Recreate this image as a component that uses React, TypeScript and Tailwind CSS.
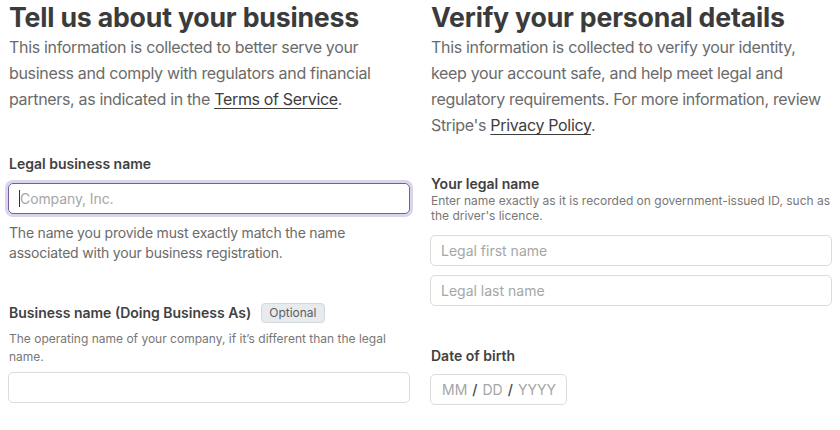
import React from "react";

const font = { fontFamily: "Inter, 'Liberation Sans', sans-serif" };

export default function App() {
  return (
    <div className="w-[840px] h-[430px] bg-white overflow-hidden px-2" style={font}>
      <div className="grid grid-cols-2 gap-5">
        {/* Left column */}
        <div className="flex flex-col">
          <h1 className="text-[26.7px] leading-[34px] font-bold text-[#3b3b3b] tracking-[-0.2px] pl-px">
            Tell us about your business
          </h1>
          <p className="text-[16px] leading-[26px] tracking-[-0.33px] text-[#6b6b6b] pl-px mt-0">
            This information is collected to better serve your business and comply with regulators and financial
            partners, as indicated in the{" "}
            <a className="underline decoration-1 underline-offset-[3px] text-[#3d3d3d]">Terms of Service</a>.
          </p>
          <div className="mt-[42px] text-[14px] leading-[20px] font-semibold text-[#414141] pl-px">
            Legal business name
          </div>
          <div className="mt-[9px] h-[31px] rounded-[5px] border border-[#6f5fa0] ring-[3px] ring-[#dcd3ec] flex items-center pl-[10px]">
            <span className="w-px h-[17px] bg-[#333]" />
            <span className="text-[14px] tracking-[-0.1px] text-[#a6a6a6]">Company, Inc.</span>
          </div>
          <p className="mt-[9px] text-[14px] leading-[20px] tracking-[-0.2px] text-[#6b6b6b] pl-px">
            The name you provide must exactly match the name associated with your business registration.
          </p>
          <div className="mt-[40px] flex items-center gap-[10px] pl-px">
            <span className="text-[14px] leading-[20px] font-semibold text-[#414141]">
              Business name (Doing Business As)
            </span>
            <span className="h-[20px] px-[7px] rounded-[4px] bg-[#e8ebee] border border-[#d3d8dd] text-[12px] leading-[18px] text-[#5b5f66]">
              Optional
            </span>
          </div>
          <p className="mt-[7px] text-[12px] leading-[18px] text-[#777] pl-px">
            The operating name of your company, if it’s different than the legal name.
          </p>
          <div className="mt-[6px] h-[31px] rounded-[5px] border border-[#dcdcdc]" />
        </div>

        {/* Right column */}
        <div className="flex flex-col">
          <h1 className="text-[26.7px] leading-[34px] font-bold text-[#3b3b3b] tracking-[-0.2px] pl-px">
            Verify your personal details
          </h1>
          <p className="text-[16px] leading-[26px] tracking-[-0.33px] text-[#6b6b6b] pl-px">
            This information is collected to verify your identity, keep your account safe, and help meet legal and
            regulatory requirements. For more information, review Stripe's{" "}
            <a className="underline decoration-1 underline-offset-[3px] text-[#3d3d3d]">Privacy Policy</a>.
          </p>
          <div className="mt-[37px] text-[14px] leading-[18px] font-semibold text-[#414141] pl-px">
            Your legal name
          </div>
          <p className="text-[12px] leading-[15px] text-[#777] pl-px">
            Enter name exactly as it is recorded on government-issued ID, such as the driver's licence.
          </p>
          <div className="mt-[12px] h-[31px] rounded-[5px] border border-[#dcdcdc] flex items-center px-[10px]">
            <span className="text-[14px] text-[#a6a6a6]">Legal first name</span>
          </div>
          <div className="mt-[9px] h-[31px] rounded-[5px] border border-[#dcdcdc] flex items-center px-[10px]">
            <span className="text-[14px] text-[#a6a6a6]">Legal last name</span>
          </div>
          <div className="mt-[40px] text-[14px] leading-[20px] font-semibold text-[#414141] pl-px">
            Date of birth
          </div>
          <div className="mt-[8px] w-[137px] h-[31px] rounded-[5px] border border-[#dcdcdc] flex items-center pl-[11px] text-[14px] text-[#a6a6a6]">
            MM <span className="text-[#444] font-medium mx-[5px]">/</span> DD{" "}
            <span className="text-[#444] font-medium mx-[5px]">/</span> YYYY
          </div>
        </div>
      </div>
    </div>
  );
}
